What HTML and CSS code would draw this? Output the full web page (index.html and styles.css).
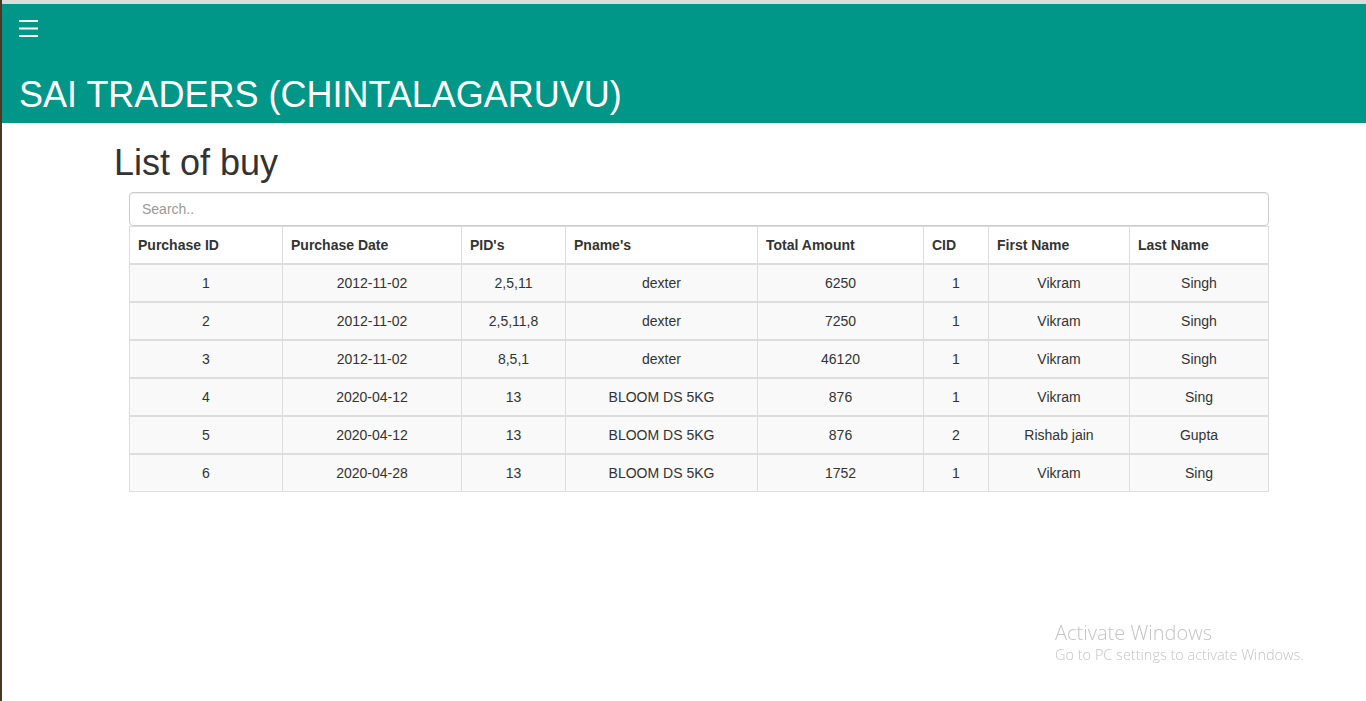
FILE: index.html
```html
<!DOCTYPE html>
<html>
<head>
<meta charset="utf-8">
<title>List of buy</title>
<link rel="stylesheet" href="styles.css">
</head>
<body>
<div class="frame">
  <header class="topbar">
    <div class="menu-icon">
      <svg width="20" height="18" viewBox="0 0 20 18"><rect x="0" y="0" width="19" height="2" fill="#fff"/><rect x="0" y="7.5" width="19" height="2" fill="#fff"/><rect x="0" y="15" width="19" height="2" fill="#fff"/></svg>
    </div>
    <h1 class="brand">SAI TRADERS (CHINTALAGARUVU)</h1>
  </header>
  <main class="content">
    <h2 class="page-title">List of buy</h2>
    <div class="table-wrap">
      <input class="search" type="text" placeholder="Search..">
      <table class="data">
        <colgroup>
          <col style="width:153px"><col style="width:179px"><col style="width:104px"><col style="width:192px"><col style="width:166px"><col style="width:65px"><col style="width:141px"><col style="width:139px">
        </colgroup>
        <thead>
          <tr><th>Purchase ID</th><th>Purchase Date</th><th>PID's</th><th>Pname's</th><th>Total Amount</th><th>CID</th><th>First Name</th><th>Last Name</th></tr>
        </thead>
        <tbody>
          <tr><td>1</td><td>2012-11-02</td><td>2,5,11</td><td>dexter</td><td>6250</td><td>1</td><td>Vikram</td><td>Singh</td></tr>
          <tr><td>2</td><td>2012-11-02</td><td>2,5,11,8</td><td>dexter</td><td>7250</td><td>1</td><td>Vikram</td><td>Singh</td></tr>
          <tr><td>3</td><td>2012-11-02</td><td>8,5,1</td><td>dexter</td><td>46120</td><td>1</td><td>Vikram</td><td>Singh</td></tr>
          <tr><td>4</td><td>2020-04-12</td><td>13</td><td>BLOOM DS 5KG</td><td>876</td><td>1</td><td>Vikram</td><td>Sing</td></tr>
          <tr><td>5</td><td>2020-04-12</td><td>13</td><td>BLOOM DS 5KG</td><td>876</td><td>2</td><td>Rishab jain</td><td>Gupta</td></tr>
          <tr><td>6</td><td>2020-04-28</td><td>13</td><td>BLOOM DS 5KG</td><td>1752</td><td>1</td><td>Vikram</td><td>Sing</td></tr>
        </tbody>
      </table>
    </div>
  </main>
</div>
<div class="watermark">
  <div class="wm-title">Activate Windows</div>
  <div class="wm-sub">Go to PC settings to activate Windows.</div>
</div>
</body>
</html>
```
FILE: styles.css
```css
html, body {
  margin: 0;
  padding: 0;
  height: 100%;
  background: #fff;
}
body {
  font-family: "Liberation Sans", Arial, sans-serif;
  font-size: 14px;
  color: #333;
  border-left: 2px solid #4a3726;
  box-sizing: border-box;
  overflow: hidden;
}
.frame {
  border-top: 4px solid #dcdcdc;
}
.topbar {
  background: #009688;
  color: #fff;
  padding: 16px 17px 8px;
}
.menu-icon {
  height: 17px;
  line-height: 0;
}
.brand {
  margin: 38px 0 0;
  font-weight: normal;
  font-size: 36px;
  line-height: 40px;
}
.content {
  padding-left: 112px;
}
.page-title {
  margin: 20px 0 9px;
  font-weight: normal;
  font-size: 36px;
  line-height: 40px;
  color: #333;
}
.table-wrap {
  margin-left: 15px;
  width: 1140px;
}
.search {
  display: block;
  box-sizing: border-box;
  width: 1140px;
  height: 34px;
  margin: 0;
  padding: 6px 12px;
  font-family: "Liberation Sans", Arial, sans-serif;
  font-size: 14px;
  color: #555;
  border: 1px solid #ccc;
  border-radius: 4px;
  box-shadow: inset 0 1px 1px rgba(0,0,0,.075);
  outline: none;
}
.search::placeholder {
  color: #999;
}
.data {
  width: 1139px;
  table-layout: fixed;
  border-collapse: collapse;
}
.data th {
  text-align: left;
  font-weight: bold;
  padding: 8px;
  line-height: 20px;
  background: #fff;
  border: 1px solid #ddd;
  border-bottom: 2px solid #ddd;
}
.data td {
  text-align: center;
  padding: 8px;
  line-height: 20px;
  background: #f9f9f9;
  border: 1px solid #ddd;
  border-top: 2px solid #ddd;
}
.watermark {
  position: fixed;
  left: 1055px;
  top: 620px;
  color: #c4c4c4;
  font-family: "Open Sans", "Noto Sans", sans-serif;
}
.wm-title {
  font-size: 20px;
  line-height: 25px;
  font-weight: 300;
}
.wm-sub {
  font-size: 14.5px;
  line-height: 20px;
  font-weight: 300;
}
```
